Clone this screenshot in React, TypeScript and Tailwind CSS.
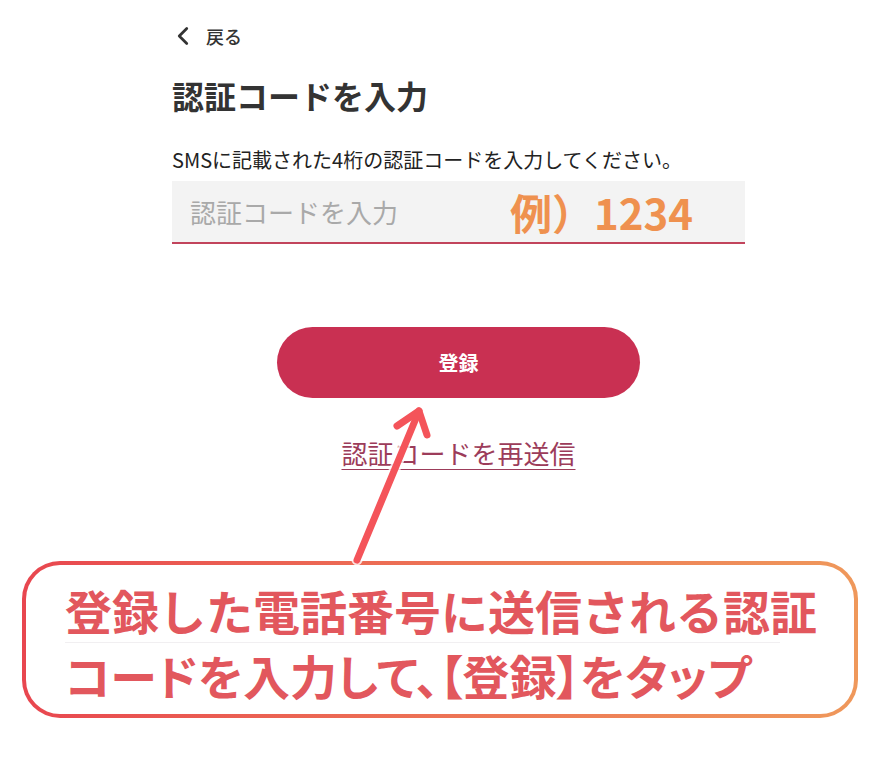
import { ChevronLeft } from 'lucide-react'

const jp = "font-['Noto_Sans_CJK_JP','Noto_Sans',sans-serif]"

function Arrow() {
  return (
    <svg className="absolute left-0 top-0 pointer-events-none" width="880" height="770" viewBox="0 0 880 770">
      <g stroke="#fff" strokeWidth="11" strokeLinecap="round" strokeLinejoin="round" fill="none" opacity="0.8">
        <path d="M357 560 L419 411" />
        <path d="M397 426 L419 411 L427 435" />
      </g>
      <g stroke="#f4545a" strokeWidth="7" strokeLinecap="round" strokeLinejoin="round" fill="none">
        <path d="M357 560 L419 411" />
        <path d="M397 426 L419 411 L427 435" />
      </g>
    </svg>
  )
}

export default function App() {
  return (
    <div className={`relative h-[770px] w-[880px] overflow-hidden bg-white ${jp}`}>
      <div className="w-[745px] pl-[172px] pt-[22px]">
        <div className="flex h-[28px] items-center gap-[8px] text-[#333]">
          <ChevronLeft className="ml-[-4px] h-[30px] w-[30px]" strokeWidth={2.2} />
          <span className="text-[18px] font-medium leading-[24px]">戻る</span>
        </div>

        <h1 className="mt-[25px] text-[32px] font-bold leading-[40px] text-[#333]">認証コードを入力</h1>

        <p className="mt-[32px] text-[20px] leading-[26px] text-[#222]">SMSに記載された4桁の認証コードを入力してください。</p>

        <div className="mt-[8px] flex h-[63px] items-center border-b-2 border-[#c2445c] bg-[#f3f3f3] pl-[18px]">
          <span className="w-[320px] text-[26px] leading-none text-[#a9a9a9]">認証コードを入力</span>
          <span className="text-[42px] font-bold leading-none text-[#ef914f]">例）1234</span>
        </div>

        <div className="mt-[83px] flex justify-center">
          <button className="flex h-[71px] w-[363px] items-center justify-center rounded-full bg-[#c93052] text-[20px] font-bold text-white">
            登録
          </button>
        </div>

        <div className="mt-[39px] flex justify-center">
          <a className="text-[26px] leading-[32px] text-[#9c3c5a] underline decoration-1 underline-offset-[5px]">認証コードを再送信</a>
        </div>
      </div>

      <div className="ml-[22px] mt-[92px] w-[836px] rounded-[38px] bg-linear-to-r from-[#e8464f] to-[#ef985b] p-[4px]">
        <div className="h-[149px] rounded-[34px] bg-white pl-[39px] pt-[12px] text-[47px] font-bold leading-[65px] text-[#e2575d]">
          <div>登録した電話番号に送信される認証</div>
          <div className="h-px w-[715px] bg-[#f1eff1]" />
          <div className="mt-[-1px] [font-feature-settings:'palt']">コードを入力して、【登録】をタップ</div>
        </div>
      </div>

      <Arrow />
    </div>
  )
}
